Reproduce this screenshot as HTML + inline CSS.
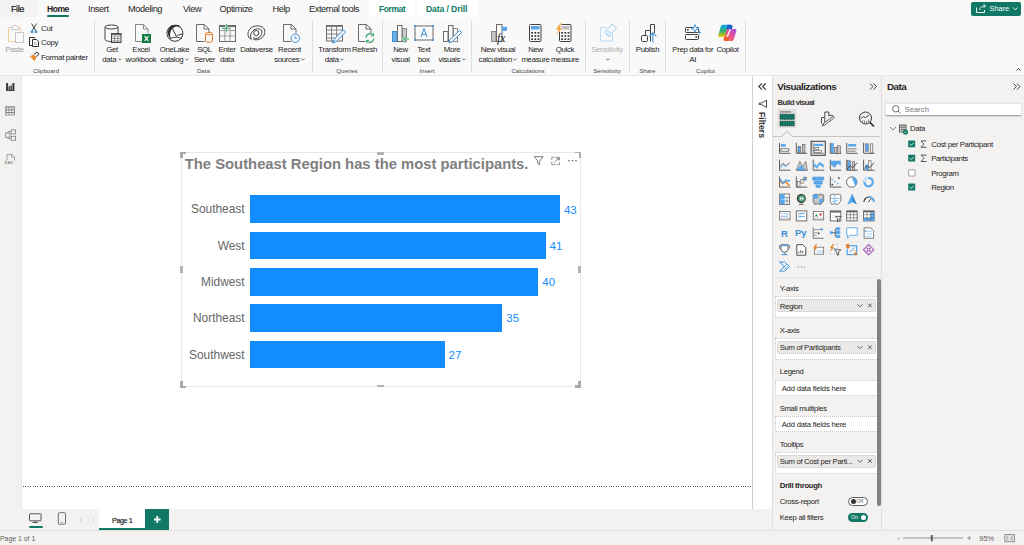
<!DOCTYPE html>
<html><head><meta charset="utf-8">
<style>
*{margin:0;padding:0;box-sizing:border-box}
html,body{width:1024px;height:545px;overflow:hidden;background:#f9f9f9;font-family:"Liberation Sans",sans-serif;color:#252423}
.a{position:absolute}
.t{position:absolute;white-space:nowrap;line-height:10px}
.c{text-align:center}
svg{position:absolute;overflow:visible}
/* tabs */
.tab{position:absolute;top:3px;line-height:12px;font-size:9.2px;letter-spacing:-0.4px;color:#252423;white-space:nowrap}
/* ribbon */
.rl{position:absolute;font-size:7.8px;letter-spacing:-0.32px;line-height:10px;color:#252423;text-align:center;white-space:nowrap}
.gl{position:absolute;top:66px;font-size:6.1px;line-height:10px;color:#484644;text-align:center;white-space:nowrap}
.sep{position:absolute;top:20px;width:1px;height:53px;background:#e1dfdd}
.chev{display:inline-block;width:2.4px;height:2.4px;border-right:0.7px solid #484644;border-bottom:0.7px solid #484644;transform:rotate(45deg);margin-left:1.5px;vertical-align:2.2px}
.pt{font-size:7.2px;color:#252423}
</style></head>
<body>
<!-- top tab strip -->
<div class="a" style="left:0;top:0;width:1024px;height:18px;background:#f9f9f9"></div>
<div class="a" style="left:0;top:0;width:37px;height:17px;background:#f3f3f3"></div>
<div class="a" style="left:369px;top:0;width:46px;height:17px;background:#ffffff"></div>
<div class="a" style="left:417px;top:0;width:60px;height:17px;background:#ffffff"></div>
<!-- ribbon -->
<div class="a" style="left:0;top:17px;width:1024px;height:58px;background:#f9f9f9"></div>
<div class="a" style="left:0;top:75px;width:1024px;height:1px;background:#e6e6e6"></div>

<div class="tab" style="left:11px;color:#1b1a19;font-weight:400;font-size:9.2px;letter-spacing:-0.5px;-webkit-text-stroke:0.2px #1b1a19">File</div>
<div class="tab" style="left:47px;color:#252423;font-weight:700;font-size:8.6px;letter-spacing:-0.5px">Home</div>
<div class="tab" style="left:88px;color:#252423;font-weight:400">Insert</div>
<div class="tab" style="left:128px;color:#252423;font-weight:400">Modeling</div>
<div class="tab" style="left:183px;color:#252423;font-weight:400">View</div>
<div class="tab" style="left:219.5px;color:#252423;font-weight:400">Optimize</div>
<div class="tab" style="left:272.5px;color:#252423;font-weight:400">Help</div>
<div class="tab" style="left:309px;color:#252423;font-weight:400">External tools</div>
<div class="tab" style="left:379px;color:#117865;font-weight:700;font-size:8.4px;letter-spacing:-0.35px">Format</div>
<div class="tab" style="left:426px;color:#117865;font-weight:700;font-size:8.6px;letter-spacing:-0.1px">Data / Drill</div>
<div class="a" style="left:47px;top:15px;width:22px;height:2px;background:#117865;border-radius:1px"></div>
<div class="rl" style="left:-15.5px;top:44.6px;width:60px;color:#a19f9d">Paste</div>
<div class="rl" style="left:82.0px;top:44.6px;width:60px">Get</div>
<div class="rl" style="left:82.0px;top:55px;width:60px">data<svg style="position:relative;display:inline-block;vertical-align:1.5px;margin-left:1.5px" width="4" height="3"><path d="M0.4 0.6l1.6 1.6 1.6-1.6" stroke="#484644" stroke-width="0.8" fill="none"/></svg></div>
<div class="rl" style="left:111.0px;top:44.6px;width:60px">Excel</div>
<div class="rl" style="left:111.0px;top:55px;width:60px">workbook</div>
<div class="rl" style="left:144.5px;top:44.6px;width:60px">OneLake</div>
<div class="rl" style="left:144.5px;top:55px;width:60px">catalog<svg style="position:relative;display:inline-block;vertical-align:1.5px;margin-left:1.5px" width="4" height="3"><path d="M0.4 0.6l1.6 1.6 1.6-1.6" stroke="#484644" stroke-width="0.8" fill="none"/></svg></div>
<div class="rl" style="left:174.5px;top:44.6px;width:60px">SQL</div>
<div class="rl" style="left:174.5px;top:55px;width:60px">Server</div>
<div class="rl" style="left:197.0px;top:44.6px;width:60px">Enter</div>
<div class="rl" style="left:197.0px;top:55px;width:60px">data</div>
<div class="rl" style="left:226.5px;top:44.6px;width:60px">Dataverse</div>
<div class="rl" style="left:259.5px;top:44.6px;width:60px">Recent</div>
<div class="rl" style="left:259.5px;top:55px;width:60px">sources<svg style="position:relative;display:inline-block;vertical-align:1.5px;margin-left:1.5px" width="4" height="3"><path d="M0.4 0.6l1.6 1.6 1.6-1.6" stroke="#484644" stroke-width="0.8" fill="none"/></svg></div>
<div class="rl" style="left:304.5px;top:44.6px;width:60px">Transform</div>
<div class="rl" style="left:304.5px;top:55px;width:60px">data<svg style="position:relative;display:inline-block;vertical-align:1.5px;margin-left:1.5px" width="4" height="3"><path d="M0.4 0.6l1.6 1.6 1.6-1.6" stroke="#484644" stroke-width="0.8" fill="none"/></svg></div>
<div class="rl" style="left:334.5px;top:44.6px;width:60px">Refresh</div>
<div class="rl" style="left:370.6px;top:44.6px;width:60px">New</div>
<div class="rl" style="left:370.6px;top:55px;width:60px">visual</div>
<div class="rl" style="left:393.8px;top:44.6px;width:60px">Text</div>
<div class="rl" style="left:393.8px;top:55px;width:60px">box</div>
<div class="rl" style="left:422.0px;top:44.6px;width:60px">More</div>
<div class="rl" style="left:422.0px;top:55px;width:60px">visuals<svg style="position:relative;display:inline-block;vertical-align:1.5px;margin-left:1.5px" width="4" height="3"><path d="M0.4 0.6l1.6 1.6 1.6-1.6" stroke="#484644" stroke-width="0.8" fill="none"/></svg></div>
<div class="rl" style="left:468.0px;top:44.6px;width:60px">New visual</div>
<div class="rl" style="left:468.0px;top:55px;width:60px">calculation<svg style="position:relative;display:inline-block;vertical-align:1.5px;margin-left:1.5px" width="4" height="3"><path d="M0.4 0.6l1.6 1.6 1.6-1.6" stroke="#484644" stroke-width="0.8" fill="none"/></svg></div>
<div class="rl" style="left:505.5px;top:44.6px;width:60px">New</div>
<div class="rl" style="left:505.5px;top:55px;width:60px">measure</div>
<div class="rl" style="left:535.0px;top:44.6px;width:60px">Quick</div>
<div class="rl" style="left:535.0px;top:55px;width:60px">measure</div>
<div class="rl" style="left:577.0px;top:44.6px;width:60px;color:#b3b0ad">Sensitivity</div>
<div class="rl" style="left:577.0px;top:55px;width:60px;color:#b3b0ad"><svg style="position:relative;display:inline-block;vertical-align:1.5px;margin-left:1.5px" width="4" height="3"><path d="M0.4 0.6l1.6 1.6 1.6-1.6" stroke="#484644" stroke-width="0.8" fill="none"/></svg></div>
<div class="rl" style="left:617.5px;top:44.6px;width:60px">Publish</div>
<div class="rl" style="left:662.8px;top:44.6px;width:60px">Prep data for</div>
<div class="rl" style="left:662.8px;top:55px;width:60px">AI</div>
<div class="rl" style="left:697.5px;top:44.6px;width:60px">Copilot</div>
<div class="gl" style="left:16px;width:60px">Clipboard</div>
<div class="gl" style="left:173.4px;width:60px">Data</div>
<div class="gl" style="left:317px;width:60px">Queries</div>
<div class="gl" style="left:397px;width:60px">Insert</div>
<div class="gl" style="left:498px;width:60px">Calculations</div>
<div class="gl" style="left:577px;width:60px">Sensitivity</div>
<div class="gl" style="left:617.4px;width:60px">Share</div>
<div class="gl" style="left:675.5px;width:60px">Copilot</div>
<div class="sep" style="left:94px"></div>
<div class="sep" style="left:312px"></div>
<div class="sep" style="left:382px"></div>
<div class="sep" style="left:471px"></div>
<div class="sep" style="left:585px"></div>
<div class="sep" style="left:629px"></div>
<div class="sep" style="left:665px"></div>
<div class="sep" style="left:745px"></div>
<div class="t" style="left:41px;top:23.6px;font-size:7.9px;letter-spacing:-0.3px">Cut</div>
<div class="t" style="left:41px;top:38.2px;font-size:7.9px;letter-spacing:-0.3px">Copy</div>
<div class="t" style="left:41px;top:52.6px;font-size:7.9px;letter-spacing:-0.33px">Format painter</div>
<div class="a" style="left:971px;top:1.5px;width:50px;height:14px;background:#117865;border-radius:2px"></div>
<div class="t" style="left:989.5px;top:3.5px;font-size:7.4px;color:#fff">Share</div>
<!-- left nav -->
<div class="a" style="left:0;top:76px;width:22px;height:434px;background:#f3f2f1"></div>
<!-- canvas -->
<div class="a" style="left:22px;top:76px;width:730px;height:433px;background:#ffffff"></div>
<!-- filters pane -->
<div class="a" style="left:752px;top:76px;width:1px;height:433px;background:#d2d0ce"></div>
<div class="a" style="left:753px;top:76px;width:19px;height:433px;background:#ffffff"></div>
<!-- viz pane -->
<div class="a" style="left:772px;top:76px;width:109px;height:454px;background:#f3f2f1;border-left:1px solid #e1dfdd"></div>
<!-- data pane -->
<div class="a" style="left:881px;top:76px;width:143px;height:454px;background:#f3f2f1;border-left:1px solid #e1dfdd"></div>
<!-- page bar -->
<div class="a" style="left:0;top:509px;width:772px;height:21px;background:#f3f2f1"></div>
<!-- status bar -->
<div class="a" style="left:0;top:530px;width:1024px;height:15px;background:#f3f2f1;border-top:1px solid #e1dfdd"></div>


<svg style="left:0;top:0" width="1024" height="80" viewBox="0 0 1024 80" fill="none" stroke-width="1">
<!-- Paste (disabled) -->
<path d="M10.5 27.5h-2v14h7" stroke="#f8cf9c"/>
<path d="M18.5 27.5h2v4" stroke="#f8cf9c"/>
<path d="M11.5 29.5v-2.5h1.5l1.5-2h1.5l1.5 2h1.5v2.5z" stroke="#c8c6c4" fill="#f9f9f9"/>
<rect x="15.5" y="32.5" width="8" height="10" stroke="#c8c6c4" fill="#f9f9f9"/>
<!-- Cut -->
<path d="M31.5 23.5l4.5 7.5M36.5 23.5l-4.5 7.5" stroke="#323130" stroke-width="0.9"/>
<circle cx="32" cy="31.8" r="1.5" fill="#4f9ad8"/>
<circle cx="36" cy="31.8" r="1.5" fill="#4f9ad8"/>
<!-- Copy -->
<path d="M32.5 45.5h-3v-8h5l0.5 1" stroke="#323130"/>
<path d="M32.5 39.5h4l2 2v5h-6z" stroke="#323130" fill="#f9f9f9"/>
<path d="M34 42.5h2M34 44.2h3" stroke="#8a8886" stroke-width="0.7"/>
<!-- Format painter -->
<path d="M29.5 56.5l4 -2 3 3 -2 3.5z" fill="#e8892c"/>
<path d="M29.5 56.5l3 1.5" stroke="#f9f9f9" stroke-width="0.6"/>
<path d="M34 54.5l3-2.5 1.8 1.8-2.5 3" stroke="#323130" fill="#f9f9f9"/>
<!-- Get data -->
<path d="M105 27v12.5c0 1.2 3 2 6 2" stroke="#424242"/>
<ellipse cx="111.5" cy="27" rx="6.5" ry="2" stroke="#424242" fill="#f9f9f9"/>
<path d="M118 27v6" stroke="#424242"/>
<rect x="111.5" y="33.5" width="9.5" height="9" stroke="#424242" fill="#f9f9f9"/>
<path d="M111.5 36h9.5M111.5 38.5h9.5M111.5 41h9.5M114.5 36v6.5M117.8 36v6.5" stroke="#6b6b6b" stroke-width="0.7"/>
<path d="M111.5 34h9.5" stroke="#424242" stroke-width="1.5"/>
<!-- Excel -->
<path d="M142 41.5h-6.5v-17h8l4.5 4.5v4.5" stroke="#8a8886"/>
<path d="M143.5 24.5v4.5h4.5" stroke="#8a8886"/>
<rect x="142" y="34" width="9" height="9" fill="#107c41"/>
<path d="M144.6 36.2l3.8 4.6M148.4 36.2l-3.8 4.6" stroke="#fff" stroke-width="1.1"/>
<!-- OneLake -->
<circle cx="174.9" cy="33.3" r="8" stroke="#323130" stroke-width="1" fill="#f9f9f9"/>
<path d="M171 25.8C175.5 23.8 179.5 24.6 181.2 26.8C177.5 25.6 173 26.8 171 30.5C169.5 33.5 169.8 37 171.5 39.5C167.5 37.5 166 30 171 25.8z" fill="#323130"/>
<path d="M172.3 28.3L176.3 36.3C178 34.8 180.5 34 182.5 34.3" stroke="#323130" stroke-width="1"/>
<path d="M170.3 38.6C174 36.7 179 36.8 181.8 38.7" stroke="#323130" stroke-width="0.9"/>
<!-- SQL Server -->
<path d="M204.5 41.5h-8v-17h8l4.5 4.5v3" stroke="#6b6b6b"/>
<path d="M204 24.5v4.5h5" stroke="#6b6b6b"/>
<path d="M205.5 33.5v7.5c0 0.8 1.5 1.3 3.5 1.3s3.5-0.5 3.5-1.3v-7.5" stroke="#e07b2a" fill="#f9f9f9"/>
<ellipse cx="209" cy="33.6" rx="3.5" ry="1.2" stroke="#e07b2a" fill="#f9f9f9"/>
<!-- Enter data -->
<rect x="219.5" y="25.5" width="16" height="16" stroke="#6b6b6b"/>
<path d="M219.5 26.2h16" stroke="#6b6b6b" stroke-width="1.6"/>
<path d="M219.5 30.5h16M219.5 36h16M224.8 26v15.5M230 26v15.5" stroke="#8a8886" stroke-width="0.8"/>
<path d="M221.5 28.3h9M226.3 23.5v9" stroke="#f9f9f9" stroke-width="2"/>
<path d="M222 28.3h8.5M226.3 24v8.5" stroke="#38a169" stroke-width="1"/>
<!-- Dataverse -->
<path d="M251.5 39.2c-3.5-0.8-4.5-5.5-2.5-9c2.2-3.8 7.5-5.2 11.8-3.8c3.8 1.2 5 5.2 3.2 8.8c-2 3.8-7 5.5-10.8 4.2" stroke="#424242" stroke-width="1"/>
<path d="M251.5 39.2c-1.5-2.5-1-6 1.5-8.5c2.5-2.3 6.5-2.5 8.5-0.5" stroke="#424242" stroke-width="1"/>
<circle cx="256.3" cy="33" r="2.6" stroke="#424242" stroke-width="1"/>
<path d="M253.2 37.5c2 1.5 5.5 1 7.5-1.5c1.5-2 1.5-4.5 0.8-6.2" stroke="#424242" stroke-width="1"/>
<!-- Recent sources -->
<path d="M291 41.5h-7.5v-17h8l4.5 4.5v4" stroke="#6b6b6b"/>
<path d="M291 24.5v4.5h5" stroke="#6b6b6b"/>
<circle cx="295.3" cy="38.2" r="4.2" stroke="#3c8fd6" fill="#f9f9f9"/>
<path d="M295 35.8v2.6h2" stroke="#3c8fd6" stroke-width="0.9"/>
<!-- Transform data -->
<rect x="326.5" y="25.5" width="16" height="15.5" stroke="#6b6b6b"/>
<path d="M326.5 26h16" stroke="#6b6b6b" stroke-width="1.6"/>
<path d="M326.5 30h16M326.5 34h16M326.5 38h12M331.5 26v15M336.5 26v12" stroke="#6b6b6b" stroke-width="0.8"/>
<path d="M343.5 30l2 2-10 10.2-3 0.8 0.8-3z" stroke="#3c8fd6" fill="#f9f9f9"/>
<path d="M335.5 40l-2.8 2.6" stroke="#3c8fd6"/>
<!-- Refresh -->
<path d="M365 41.5h-6.5v-17h8l4.5 4.5v4" stroke="#6b6b6b"/>
<path d="M366 24.5v4.5h5" stroke="#6b6b6b"/>
<path d="M366 37.5a4 4 0 0 1 7-2.5M373.8 38.5a4 4 0 0 1-7 2.5" stroke="#38a169" stroke-width="1.1"/>
<path d="M373.5 33v2.8h-2.8M366.3 43.2v-2.8h2.8" stroke="#38a169" stroke-width="1"/>
<!-- New visual -->
<rect x="392.5" y="31.5" width="4.5" height="10" fill="#6aaeea" stroke="#3c8fd6"/>
<rect x="397.5" y="25.5" width="4.5" height="16" stroke="#6b6b6b" fill="#f9f9f9"/>
<rect x="402.5" y="28.5" width="4" height="13" fill="#c8c6c4" stroke="#8a8886"/>
<path d="M400.5 39h9M405 34.5v9" stroke="#f9f9f9" stroke-width="2"/>
<path d="M401 39h8M405 35v8" stroke="#38a169" stroke-width="1"/>
<!-- Text box -->
<rect x="415" y="26" width="18" height="14" stroke="#6b6b6b"/>
<circle cx="415" cy="26" r="1" fill="#3c8fd6"/><circle cx="433" cy="26" r="1" fill="#3c8fd6"/>
<circle cx="415" cy="40" r="1" fill="#3c8fd6"/><circle cx="433" cy="40" r="1" fill="#3c8fd6"/>
<path d="M421 37l3-8.5 3 8.5M422 34.5h4" stroke="#3c8fd6" stroke-width="1"/>
<!-- More visuals -->
<rect x="443.5" y="31.5" width="4.5" height="10" stroke="#6b6b6b" fill="#f9f9f9"/>
<rect x="448.5" y="25.5" width="4.5" height="16" stroke="#6b6b6b" fill="#f9f9f9"/>
<rect x="453.5" y="28.5" width="4" height="13" stroke="#8a8886" fill="#f9f9f9"/>
<path d="M459.5 30.5l2 2-9.5 9.5-3 0.8 0.8-3z" stroke="#3c8fd6" fill="#f9f9f9"/>
<!-- New visual calculation -->
<rect x="491.5" y="31.5" width="4.5" height="10" fill="#c8c6c4" stroke="#8a8886"/>
<rect x="496.5" y="24.5" width="5.5" height="17" stroke="#6b6b6b" fill="#f9f9f9"/>
<rect x="502" y="26.8" width="5" height="4.2" fill="#5aa7ec"/>
<text x="497" y="41.5" font-family="Liberation Serif" font-style="italic" font-size="11.5" fill="#1b1a19">fx</text>
<!-- New measure -->
<rect x="529.5" y="24.5" width="11.5" height="17" rx="1" stroke="#424242" fill="#f9f9f9"/>
<rect x="531" y="26" width="8.5" height="3.5" fill="#5ba3e6"/>
<g fill="#323130"><rect x="531.2" y="32" width="1.8" height="1.6"/><rect x="534.4" y="32" width="1.8" height="1.6"/><rect x="537.6" y="32" width="1.8" height="1.6"/>
<rect x="531.2" y="35.2" width="1.8" height="1.6"/><rect x="534.4" y="35.2" width="1.8" height="1.6"/><rect x="537.6" y="35.2" width="1.8" height="1.6"/>
<rect x="531.2" y="38.4" width="1.8" height="1.6"/><rect x="534.4" y="38.4" width="1.8" height="1.6"/><rect x="537.6" y="38.4" width="1.8" height="1.6"/></g>
<!-- Quick measure -->
<rect x="559.5" y="24.5" width="11.5" height="17" rx="1" stroke="#424242" fill="#f9f9f9"/>
<rect x="561" y="26" width="8.5" height="3.5" fill="#bdbdbd"/>
<g fill="#323130"><rect x="561.2" y="32" width="1.8" height="1.6"/><rect x="564.4" y="32" width="1.8" height="1.6"/><rect x="567.6" y="32" width="1.8" height="1.6"/>
<rect x="561.2" y="35.2" width="1.8" height="1.6"/><rect x="564.4" y="35.2" width="1.8" height="1.6"/><rect x="567.6" y="35.2" width="1.8" height="1.6"/>
<rect x="561.2" y="38.4" width="1.8" height="1.6"/><rect x="564.4" y="38.4" width="1.8" height="1.6"/><rect x="567.6" y="38.4" width="1.8" height="1.6"/></g>
<path d="M560.8 22.8l-5.6 7h3.3l-3.2 6.2 7.6-8.3h-3.3l2.8-4.9z" fill="#f29a2e" stroke="#f9f9f9" stroke-width="0.6"/>
<!-- Sensitivity (disabled) -->
<path d="M600.5 27.5v13.5h12v-7" stroke="#b9d9f2"/>
<path d="M600.5 27.5h6" stroke="#b9d9f2"/>
<path d="M612 24l4.5 4-7.5 8.5-4.5-4z" stroke="#9ccbee" fill="#f9f9f9"/>
<path d="M606 33l3 2.8M607.2 31.6l3 2.8M608.4 30.2l3 2.8" stroke="#9ccbee" stroke-width="0.8"/>
<!-- Publish -->
<rect x="641.5" y="35.5" width="6" height="6" rx="1" stroke="#424242"/>
<path d="M645.5 35.5v-5h5v11" stroke="#424242"/>
<path d="M650.5 30.5v-6h4v8.5" stroke="#424242"/>
<path d="M652.8 42.6v-9.5M649.3 36.3l3.5-3.5 3.5 3.5" stroke="#3c8fd6" stroke-width="1.1"/>
<!-- Prep data for AI -->
<rect x="685.5" y="27.5" width="13" height="5" rx="0.8" stroke="#424242" fill="#f9f9f9"/>
<rect x="685.5" y="34.5" width="13" height="5" rx="0.8" stroke="#424242" fill="#f9f9f9"/>
<rect x="687" y="29.2" width="1.6" height="1.6" fill="#323130"/>
<rect x="695.5" y="36.2" width="1.6" height="1.6" fill="#323130"/>
<path d="M695 24.5l1 3 3 1-3 1-1 3-1-3-3-1 3-1z" stroke="#3c8fd6" fill="#f9f9f9" stroke-width="0.9"/>
<path d="M699.5 30.5l0.6 1.4 1.4 0.6-1.4 0.6-0.6 1.4-0.6-1.4-1.4-0.6 1.4-0.6z" fill="#3c8fd6"/>
<!-- Copilot -->
<defs>
<linearGradient id="cpA" x1="0" y1="0" x2="0" y2="1"><stop offset="0" stop-color="#1aa0f5"/><stop offset="0.5" stop-color="#2bb673"/><stop offset="1" stop-color="#f5c400"/></linearGradient>
<linearGradient id="cpB" x1="1" y1="0" x2="0" y2="1"><stop offset="0" stop-color="#9b4fe8"/><stop offset="0.5" stop-color="#ee4f8c"/><stop offset="1" stop-color="#ff8a3d"/></linearGradient>
</defs>
<path d="M722.5 24.8H730.5C732 24.8 732.8 26 732.3 27.5L728.5 37H719.8C718.6 37 718 36 718.3 35L720.8 26.6C721.1 25.5 721.7 24.8 722.5 24.8Z" fill="url(#cpA)"/>
<path d="M727.5 24.8H730.5C732 24.8 732.8 26 732.3 27.5L731.6 29.5H726.5z" fill="#1d4fd0" opacity="0.8"/>
<path d="M728 29H734.8C736 29 736.7 30 736.3 31.3L733.7 39.5C733.4 40.4 732.6 41 731.7 41H725.5C724.3 41 723.8 40 724.1 39L726.5 30.5C726.8 29.6 727.3 29 728 29Z" fill="url(#cpB)"/>
<path d="M724.3 37h4.5l-1 4h-2.8c-1.2 0-1.7-1-1.4-2z" fill="#f25a2a" opacity="0.85"/>
<path d="M730.3 29.2l-3.1 7.6" stroke="#ffffff" stroke-width="1.3"/>
<!-- Share icon -->
<path d="M976.5 7.5v5h8v-2.5" stroke="#fff" stroke-width="0.9"/>
<path d="M979.5 10c0.5-2.5 2.5-4 5-4h0.5M983.5 4l2 2-2 2" stroke="#fff" stroke-width="0.9"/>
<path d="M1013 7.5l2.3 2.3 2.3-2.3" stroke="#fff" stroke-width="0.9"/>
<!-- ribbon collapse -->
<path d="M1016.5 70.5l2-2 2 2" stroke="#323130" stroke-width="0.9"/>
</svg>

<div class="a" style="left:21px;top:76px;width:1px;height:433px;background:#e8e6e4"></div>
<svg style="left:0;top:0" width="30" height="170" fill="none">
<rect x="6.1" y="83" width="2" height="7.8" fill="#3b3a39"/>
<rect x="8.4" y="86.2" width="1.7" height="4.6" fill="#555453"/>
<rect x="10.4" y="85.4" width="1.7" height="5.4" fill="#555453"/>
<rect x="12.4" y="83" width="2" height="7.8" fill="#3b3a39"/>
<rect x="6.1" y="90" width="8.3" height="0.9" fill="#3b3a39"/>
<rect x="5.3" y="106.3" width="9.6" height="9.1" fill="#858382" />
<g fill="#f3f2f1"><rect x="6.5" y="107.6" width="2" height="1.7"/><rect x="9.2" y="107.6" width="2" height="1.7"/><rect x="11.9" y="107.6" width="2" height="1.7"/>
<rect x="6.5" y="110.3" width="2" height="1.7"/><rect x="9.2" y="110.3" width="2" height="1.7"/><rect x="11.9" y="110.3" width="2" height="1.7"/>
<rect x="6.5" y="113" width="2" height="1.7"/><rect x="9.2" y="113" width="2" height="1.7"/><rect x="11.9" y="113" width="2" height="1.7"/></g>
<rect x="5.7" y="133" width="4.2" height="4.3" stroke="#8a8886" stroke-width="0.9"/>
<rect x="11.2" y="129.9" width="4.3" height="4" stroke="#8a8886" stroke-width="0.9"/>
<rect x="11.2" y="136.3" width="4.3" height="4" stroke="#8a8886" stroke-width="0.9"/>
<path d="M8 133v-1.5h3.2M8 137.3v1.5h3.2" stroke="#8a8886" stroke-width="0.8"/>
<path d="M7 160.5v-6h4.8l2.7 2.7v3.3" stroke="#9a9896" stroke-width="0.9"/><path d="M11.5 154.5v2.8h3" stroke="#9a9896" stroke-width="0.7"/>
<text x="4.6" y="164.3" font-family="Liberation Sans" font-size="4" font-weight="700" fill="#8a8886">DAX</text>
</svg>

<div class="a" style="left:180.8px;top:152.3px;width:399.8px;height:234.6px;border:1.4px solid #e8e8e8"></div>
<div class="a" style="left:377px;top:152px;width:7px;height:2.6px;background:#b3b3b3"></div>
<div class="a" style="left:377px;top:384.8px;width:7px;height:2.6px;background:#b3b3b3"></div>
<div class="a" style="left:180.1px;top:152.1px;width:6px;height:2px;background:#aaaaaa"></div><div class="a" style="left:180.1px;top:152.1px;width:2.8px;height:5.6px;background:#aaaaaa"></div><div class="a" style="left:575px;top:152.1px;width:5.8px;height:1.4px;background:#aaaaaa"></div><div class="a" style="left:579.4px;top:152.1px;width:1.4px;height:5.7px;background:#aaaaaa"></div><div class="a" style="left:180.2px;top:381.2px;width:2.8px;height:6.4px;background:#aaaaaa"></div><div class="a" style="left:180.2px;top:385.6px;width:5.8px;height:2px;background:#aaaaaa"></div><div class="a" style="left:578.3px;top:381.2px;width:2.5px;height:6.4px;background:#aaaaaa"></div><div class="a" style="left:575px;top:385.1px;width:5.8px;height:2.5px;background:#aaaaaa"></div>
<div class="a" style="left:180.2px;top:266px;width:2.6px;height:7px;background:#b3b3b3"></div>
<div class="a" style="left:578px;top:265.9px;width:3px;height:7.1px;background:#b3b3b3"></div>
<div class="t" style="left:184.8px;top:156.1px;line-height:16px;font-size:14.8px;font-weight:700;color:#808080">The Southeast Region has the most participants.</div>
<svg style="left:0;top:0" width="1024" height="545" fill="none">
<path d="M534.2 156.7h9l-3.5 4.2v3.8l-2 -1v-2.8z" stroke="#6b6b6b" stroke-width="0.9"/>
<path d="M551.8 160v-2.7h2.7M559.6 162v2.7h-2.7M551.8 162v2.7h4M559.6 160v-2.7h-4M553.5 163l5-4.5M556.3 158.3h2.4v2.4" stroke="#8a8886" stroke-width="0.9"/>
<circle cx="569" cy="160.7" r="0.8" fill="#605e5c"/><circle cx="572.5" cy="160.7" r="0.8" fill="#605e5c"/><circle cx="576" cy="160.7" r="0.8" fill="#605e5c"/>
</svg>
<div class="a" style="left:249.9px;top:195.30px;width:310.03px;height:27.7px;background:#118dff"></div>
<div class="t" style="left:140px;width:104.6px;text-align:right;top:202.45px;line-height:14px;font-size:11.9px;color:#666666">Southeast</div>
<div class="t" style="left:563.93px;top:202.50px;line-height:14px;font-size:11.5px;color:#118dff">43</div>
<div class="a" style="left:249.9px;top:231.60px;width:295.61px;height:27.7px;background:#118dff"></div>
<div class="t" style="left:140px;width:104.6px;text-align:right;top:238.75px;line-height:14px;font-size:11.9px;color:#666666">West</div>
<div class="t" style="left:549.51px;top:238.80px;line-height:14px;font-size:11.5px;color:#118dff">41</div>
<div class="a" style="left:249.9px;top:267.90px;width:288.40px;height:27.7px;background:#118dff"></div>
<div class="t" style="left:140px;width:104.6px;text-align:right;top:275.05px;line-height:14px;font-size:11.9px;color:#666666">Midwest</div>
<div class="t" style="left:542.30px;top:275.10px;line-height:14px;font-size:11.5px;color:#118dff">40</div>
<div class="a" style="left:249.9px;top:304.20px;width:252.35px;height:27.7px;background:#118dff"></div>
<div class="t" style="left:140px;width:104.6px;text-align:right;top:311.35px;line-height:14px;font-size:11.9px;color:#666666">Northeast</div>
<div class="t" style="left:506.25px;top:311.40px;line-height:14px;font-size:11.5px;color:#118dff">35</div>
<div class="a" style="left:249.9px;top:340.50px;width:194.67px;height:27.7px;background:#118dff"></div>
<div class="t" style="left:140px;width:104.6px;text-align:right;top:347.65px;line-height:14px;font-size:11.9px;color:#666666">Southwest</div>
<div class="t" style="left:448.57px;top:347.70px;line-height:14px;font-size:11.5px;color:#118dff">27</div>
<div class="a" style="left:23px;top:486px;width:729px;height:1px;background:repeating-linear-gradient(90deg,#555 0 1px,transparent 1px 2.4px)"></div>
<svg style="left:0;top:0" width="1024" height="545" fill="none">
<path d="M762 83.3l-3.2 3.2 3.2 3.2M765.8 83.3l-3.2 3.2 3.2 3.2" stroke="#323130" stroke-width="1.1"/>
<path d="M766.5 100.2v7.3l-5-2.9h-2.3v-1.5h2.3z" stroke="#323130" stroke-width="0.9" stroke-linejoin="round"/>
</svg>
<div class="t" style="left:732px;top:120px;width:60px;line-height:10px;font-size:8.7px;font-weight:700;color:#323130;transform:rotate(90deg);transform-origin:center;text-align:center">Filters</div>

<svg style="left:0;top:0" width="1024" height="545" fill="none" stroke-width="1">
<g transform="translate(779,142.8)"><path d="M0.5 0v10.5h11" stroke="#605e5c"/><rect x="1.8" y="1.3" width="5" height="2.6" fill="#5aa7ec"/><rect x="1.8" y="6" width="8" height="2.4" stroke="#605e5c" stroke-width="0.8" fill="#ffffff"/></g>
<g transform="translate(795.8,142.8)"><path d="M0.5 0v10.5h11" stroke="#605e5c"/><rect x="2.2" y="3.5" width="2.6" height="6.5" fill="#5aa7ec" stroke="#605e5c" stroke-width="0.6"/><rect x="6.5" y="1.5" width="2.6" height="8.6" stroke="#605e5c" stroke-width="0.7" fill="#c8c6c4"/></g>
<g transform="translate(812.7,142.8)"><rect x="-1.6" y="-1.5" width="14.2" height="14" stroke="#484644" stroke-width="1.1"/><path d="M0.5 0v10.5h11" stroke="#605e5c" stroke-width="0.8"/><rect x="1.5" y="1" width="9" height="2.3" fill="#5aa7ec"/><rect x="1.5" y="4.5" width="4.5" height="2" stroke="#605e5c" stroke-width="0.6"/><rect x="1.5" y="7.5" width="7" height="2" stroke="#605e5c" stroke-width="0.6"/></g>
<g transform="translate(829.8,142.8)"><path d="M0.5 0v10.5h11" stroke="#605e5c"/><rect x="1.2" y="0.3" width="2.8" height="10" fill="#5aa7ec"/><rect x="4.5" y="4.5" width="2.6" height="6" fill="#c8c6c4" stroke="#605e5c" stroke-width="0.6"/><rect x="7.8" y="3" width="3" height="7.5" fill="#c8c6c4" stroke="#605e5c" stroke-width="0.6"/></g>
<g transform="translate(846.2,142.8)"><path d="M0.5 0v10.5h11" stroke="#605e5c"/><rect x="2" y="1.2" width="8" height="2.6" fill="#5aa7ec"/><path d="M1.5 6h9M1.5 8.3h8" stroke="#605e5c" stroke-width="0.8"/></g>
<g transform="translate(863.1,142.8)"><path d="M0.5 0v10.5h11" stroke="#605e5c"/><rect x="2.3" y="1" width="3" height="7.5" fill="#5aa7ec" stroke="#605e5c" stroke-width="0.5"/><rect x="7.2" y="1" width="2.5" height="9.5" stroke="#605e5c" stroke-width="0.7"/></g>
<g transform="translate(779,159.7)"><path d="M0.5 0v10.5h11" stroke="#605e5c"/><path d="M1 9l3-4 2.5 2 4-4" stroke="#5aa7ec" stroke-width="0.9"/><path d="M1 6.5l3-3 3 2.5 3.5-3" stroke="#605e5c" stroke-width="0.8"/></g>
<g transform="translate(795.8,159.7)"><path d="M0.5 10.5h11" stroke="#605e5c"/><path d="M0.5 10.5l3.5-9 3 5 3-5 1.5 9z" fill="#c8c6c4" stroke="#605e5c" stroke-width="0.6"/><path d="M0.5 10.5l2.5-3 3 -2 3.5 5z" fill="#5aa7ec"/></g>
<g transform="translate(812.7,159.7)"><path d="M0.5 0v10.5h11" stroke="#605e5c"/><path d="M1 3l3 3 3-4 4 3v3l-4-3-3 4-3-3z" fill="#5aa7ec"/><path d="M1 5l3 3 3-4 4 3" stroke="#5aa7ec" stroke-width="0.8"/></g>
<g transform="translate(829.8,159.7)"><path d="M0.5 0v10.5h11" stroke="#605e5c"/><path d="M1 1h10v5l-3-2-3 4-4-3z" fill="#5aa7ec"/></g>
<g transform="translate(846.2,159.7)"><path d="M0.5 0v10.5h11" stroke="#605e5c"/><rect x="1.5" y="1" width="2.6" height="9.5" fill="#5aa7ec" stroke="#605e5c" stroke-width="0.5"/><rect x="6" y="2" width="2.5" height="8.5" stroke="#605e5c" stroke-width="0.6" fill="#c8c6c4"/><path d="M1 9l3-3 2.5 2 4.5-5" stroke="#323130" stroke-width="0.8"/></g>
<g transform="translate(863.1,159.7)"><path d="M0.5 0v10.5h11" stroke="#605e5c"/><rect x="2" y="5" width="3" height="5.5" fill="#5aa7ec"/><rect x="5.5" y="1" width="2.5" height="9.5" stroke="#605e5c" stroke-width="0.6"/><path d="M1 9l3-3 2.5 2 4.5-5" stroke="#323130" stroke-width="0.8"/></g>
<g transform="translate(779,176.6)"><path d="M0.5 0v10.5h11" stroke="#605e5c"/><path d="M1 4l2.5 3 3-2 4 4" stroke="#e8892c" stroke-width="1.6"/><path d="M1 2.5l3 4 3-3 4 1" stroke="#5aa7ec" stroke-width="1.6"/></g>
<g transform="translate(795.8,176.6)"><path d="M0.5 0v10.5h11" stroke="#605e5c"/><rect x="1.8" y="5" width="2.4" height="5.5" stroke="#605e5c" stroke-width="0.6"/><rect x="5" y="3" width="2.4" height="4" stroke="#605e5c" stroke-width="0.6"/><rect x="8" y="0.5" width="2.4" height="3" fill="#5aa7ec" stroke="#605e5c" stroke-width="0.5"/></g>
<g transform="translate(812.7,176.6)"><path d="M0 0.5h11v3h-11z" fill="#5aa7ec" stroke="#3c8fd6" stroke-width="0.6"/><path d="M1.5 4.5h8v3h-8z" fill="#5aa7ec" stroke="#3c8fd6" stroke-width="0.6"/><path d="M3 8.2h5v3h-5z" fill="#5aa7ec"/></g>
<g transform="translate(829.8,176.6)"><path d="M0.5 0v10.5h11" stroke="#605e5c"/><circle cx="9" cy="1.5" r="0.9" fill="#323130"/><circle cx="2.5" cy="8" r="0.9" fill="#323130"/><circle cx="2.5" cy="3" r="0.8" fill="#5aa7ec"/><circle cx="5" cy="5" r="0.8" fill="#5aa7ec"/><circle cx="8" cy="7" r="0.8" fill="#5aa7ec"/></g>
<g transform="translate(846.2,176.6)"><circle cx="5.5" cy="5.5" r="5.2" stroke="#605e5c" stroke-width="0.9" fill="#ffffff"/><path d="M5.5 0.3a5.2 5.2 0 0 1 3.5 9.2z" fill="#5aa7ec"/></g>
<g transform="translate(863.1,176.6)"><circle cx="5.5" cy="5.5" r="4.2" stroke="#5aa7ec" stroke-width="2.2"/><path d="M5.5 1.3a4.2 4.2 0 0 0 -4.2 4.2" stroke="#ffffff" stroke-width="1.2"/></g>
<g transform="translate(779,193.5)"><rect x="0.5" y="0.5" width="10" height="10.5" stroke="#605e5c" stroke-width="0.8" fill="#ffffff"/><rect x="0.8" y="0.8" width="5" height="5" fill="#5aa7ec"/><rect x="0.8" y="6" width="5" height="4.8" fill="#5aa7ec"/><path d="M6 4h4.5M8 4v6.8M6 7.5h4.5" stroke="#605e5c" stroke-width="0.6"/></g>
<g transform="translate(795.8,193.5)"><circle cx="5.5" cy="5" r="4.5" fill="#3b3a39"/><circle cx="5.8" cy="5" r="3.3" fill="#38a169"/><path d="M4.5 3v4M4.5 5h3M7 3v4" stroke="#ffffff" stroke-width="0.9"/><path d="M5.5 9.5v1.2M3 11h5" stroke="#605e5c" stroke-width="0.8"/></g>
<g transform="translate(812.7,193.5)"><path d="M0.5 1.5l3-1 2 1 2-1 3.5 1v6l-3 3.5-3-0.8-3 0.8-1.5-3z" fill="#c8c6c4" stroke="#605e5c" stroke-width="0.8"/><path d="M0.5 1.5l3-1 2 1v3l-3 1-2-1z" fill="#5aa7ec"/><path d="M6.5 6l4-1v2.5l-3 3.5-1-0.5z" fill="#5aa7ec"/></g>
<g transform="translate(829.8,193.5)"><path d="M0.5 1.5l3-1 2 1 2-1 3.5 1v6l-3 3.5-3-0.8-3 0.8-1.5-3z" fill="#ffffff" stroke="#605e5c" stroke-width="0.8"/><path d="M1 5h9M5 1.5v9M2.5 8l6-1" stroke="#5aa7ec" stroke-width="0.7"/></g>
<g transform="translate(846.2,193.5)"><path d="M6 0.3l4.7 10.7-4.7-2.5-4.7 2.5z" fill="#2f8ad8"/><path d="M6 0.3l-4.7 10.7 4.7-2.5z" fill="#5fb0f0"/></g>
<g transform="translate(863.1,193.5)"><path d="M0.8 8.5a5 5 0 0 1 10 0" stroke="#3b3a39" stroke-width="1.2"/><path d="M5.8 3.5a5 5 0 0 1 5 5" stroke="#5aa7ec" stroke-width="1.8"/><path d="M5 8.5l3-3" stroke="#3b3a39" stroke-width="1"/></g>
<g transform="translate(779,210.4)"><rect x="0.5" y="1" width="10.5" height="8.5" fill="#e1dfdd" stroke="#605e5c" stroke-width="0.7"/><rect x="1.3" y="1.8" width="9" height="5" fill="#ffffff"/><text x="1.5" y="6.3" font-family="Liberation Sans" font-size="4.6" fill="#5aa7ec">123</text></g>
<g transform="translate(795.8,210.4)"><rect x="0.5" y="0.5" width="10.5" height="10" fill="#ffffff" stroke="#605e5c" stroke-width="0.9"/><path d="M2.5 3h6.5M2.5 6h6.5" stroke="#5aa7ec" stroke-width="1"/><path d="M2.5 4.5h3M2.5 7.8h3" stroke="#c8c6c4" stroke-width="0.6"/></g>
<g transform="translate(812.7,210.4)"><rect x="0.5" y="1" width="10.5" height="8.5" fill="#e1dfdd" stroke="#605e5c" stroke-width="0.7"/><rect x="1.3" y="1.8" width="9" height="5" fill="#ffffff"/><path d="M2 6l1.7-3 1.7 3z" fill="#38a169"/><path d="M6.2 3h3.4l-1.7 3z" fill="#e04646"/></g>
<g transform="translate(829.8,210.4)"><rect x="0.5" y="0.5" width="10.5" height="10" fill="#ffffff" stroke="#605e5c" stroke-width="0.9"/><path d="M0.5 1.5h10.5" stroke="#605e5c" stroke-width="1.4"/><path d="M5.5 6h6l-2.2 2.3v2.7h-1.6v-2.7z" fill="#ffffff" stroke="#3b3a39" stroke-width="0.8"/><path d="M2 5h2M2 7h2" stroke="#c8c6c4" stroke-width="0.6"/></g>
<g transform="translate(846.2,210.4)"><rect x="0.5" y="0.5" width="10.5" height="10" fill="#ffffff" stroke="#605e5c" stroke-width="0.9"/><path d="M0.5 1.2h10.5" stroke="#605e5c" stroke-width="1.4"/><path d="M0.5 4.3h10.5M0.5 7.4h10.5M4 1v9.5M7.5 1v9.5" stroke="#605e5c" stroke-width="0.6"/></g>
<g transform="translate(863.1,210.4)"><rect x="0.5" y="0.5" width="10.5" height="10" fill="#ffffff" stroke="#605e5c" stroke-width="0.9"/><path d="M0.5 1.2h10.5" stroke="#605e5c" stroke-width="1.4"/><rect x="7.5" y="2" width="3.5" height="8.5" fill="#5aa7ec"/><rect x="0.5" y="7.4" width="10.5" height="3" fill="#5aa7ec"/><path d="M0.5 4.3h10.5M0.5 7.4h10.5M4 1v9.5M7.5 1v9.5" stroke="#605e5c" stroke-width="0.5"/></g>
<g transform="translate(779,227.3)"><text x="2" y="10" font-family="Liberation Sans" font-weight="700" font-size="9.5" fill="#3c8fd6">R</text></g>
<g transform="translate(795.8,227.3)"><text x="-0.8" y="9" font-family="Liberation Sans" font-weight="700" font-size="9.5" fill="#3c8fd6">Py</text></g>
<g transform="translate(812.7,227.3)"><path d="M0.5 0v11h10.5" stroke="#605e5c" stroke-width="0.8"/><path d="M1 2.2h7M1 5.5h4M1 8h3" stroke="#605e5c" stroke-width="0.6"/><circle cx="9" cy="2" r="1.2" fill="#5aa7ec"/><circle cx="6" cy="6" r="0.9" fill="#3b3a39"/></g>
<g transform="translate(829.8,227.3)"><rect x="0" y="4" width="3" height="2.8" fill="#5aa7ec"/><path d="M3 5.4h2.5M5.5 1.5v8" stroke="#3b3a39" stroke-width="0.8"/><rect x="6" y="0" width="4.5" height="3.2" rx="1" fill="#5aa7ec"/><rect x="6" y="3.8" width="4.5" height="3.2" rx="1" fill="#5aa7ec"/><rect x="6" y="7.6" width="4.5" height="3.2" rx="1" fill="#5aa7ec"/></g>
<g transform="translate(846.2,227.3)"><path d="M0.5 0.5h10.5v7.5h-7l-2.5 3v-3h-1z" stroke="#5aa7ec" stroke-width="0.9" fill="#ffffff"/></g>
<g transform="translate(863.1,227.3)"><path d="M1 0.5h6.5l3 3v7.5h-9.5z" stroke="#605e5c" stroke-width="0.8" fill="#ffffff"/><circle cx="2.5" cy="4" r="1" fill="#5aa7ec"/><path d="M4 4h5M4 6.5h5M2 9h6" stroke="#5aa7ec" stroke-width="0.6"/></g>
<g transform="translate(779,244.2)"><path d="M2 0.5h7v4a3.5 3.5 0 0 1-7 0z" fill="#ffffff" stroke="#605e5c" stroke-width="0.9"/><path d="M2 1.5h-1.5v1.5a2 2 0 0 0 1.5 2M9 1.5h1.5v1.5a2 2 0 0 1-1.5 2" stroke="#605e5c" stroke-width="0.8"/><path d="M2 0.5h7v1.5h-7z" fill="#5aa7ec"/><path d="M5.5 8v1.5" stroke="#605e5c" stroke-width="0.9"/><rect x="2.5" y="9.5" width="6" height="1.5" rx="0.7" fill="#5aa7ec"/></g>
<g transform="translate(795.8,244.2)"><path d="M1 0.5h6l3 3v7.5h-9z" stroke="#3b3a39" stroke-width="0.9" fill="#ffffff"/><path d="M3 9v-1.5M5 9v-3M7 9v-2" stroke="#3b3a39" stroke-width="0.9"/></g>
<g transform="translate(812.7,244.2)"><rect x="2" y="3" width="9" height="7" fill="#ffffff" stroke="#605e5c" stroke-width="0.7"/><text x="3.5" y="8.5" font-family="Liberation Sans" font-size="4.2" fill="#5aa7ec">123</text><path d="M3 0l-2.5 4h2l-1.5 3.5 4-4.5h-2l1.5-3z" fill="#e8892c"/></g>
<g transform="translate(829.8,244.2)"><rect x="3.5" y="0.5" width="4" height="4" fill="#ffffff" stroke="#c8c6c4" stroke-width="0.6"/><rect x="1" y="6" width="3.5" height="4" fill="#ffffff" stroke="#c8c6c4" stroke-width="0.6"/><path d="M5 5.5h6l-2.2 2.3v3h-1.6v-3z" fill="#ffffff" stroke="#3b3a39" stroke-width="0.8"/><path d="M2.5 0l-2.5 4h2l-1.5 3.5 4-4.5h-2l1.5-3z" fill="#e8892c"/><path d="M4 4l2 1" stroke="#5aa7ec" stroke-width="0.8"/></g>
<g transform="translate(846.2,244.2)"><path d="M3 1.5h7.5v9h-9.5v-6" stroke="#5aa7ec" stroke-width="1.3"/><path d="M3.5 8l5-5" stroke="#5aa7ec" stroke-width="1"/><rect x="0" y="-0.3" width="3.2" height="4.5" rx="0.8" fill="#e07b2a"/><circle cx="9.5" cy="9.5" r="1.5" fill="#e07b2a"/><circle cx="8.2" cy="6.3" r="0.6" fill="#e07b2a"/></g>
<g transform="translate(863.1,244.2)"><path d="M5.5 0.3l5.2 5.2-5.2 5.2-5.2-5.2z" stroke="#a55fc0" stroke-width="1.1"/><circle cx="4.4" cy="4.4" r="1" fill="#a55fc0"/><circle cx="6.6" cy="4.4" r="1" fill="#a55fc0"/><circle cx="4.4" cy="6.6" r="1" fill="#a55fc0"/><circle cx="6.6" cy="6.6" r="1" fill="#a55fc0"/></g>
<g transform="translate(779,261.1)"><path d="M0.5 1h5l5 4.5-5 4.5h-5l5-4.5z" stroke="#3c8fd6" stroke-width="1" fill="#ffffff"/><path d="M3.5 8l4-5" stroke="#3c8fd6" stroke-width="0.8"/><path d="M5.5 8.5l3-3.5" stroke="#3c8fd6" stroke-width="0.8"/></g>
<g transform="translate(795.8,261.1)"><circle cx="2.5" cy="6" r="0.6" fill="#605e5c"/><circle cx="5.5" cy="6" r="0.6" fill="#605e5c"/><circle cx="8.5" cy="6" r="0.6" fill="#605e5c"/></g>
<rect x="777.4" y="109.1" width="19.1" height="19" rx="2" fill="#e1dfdd"/>
<rect x="780" y="111.2" width="11" height="1.4" fill="#8a8886"/>
<rect x="780" y="114.2" width="14.3" height="5.2" fill="#117865" stroke="#252423" stroke-width="0.7" stroke-dasharray="1 0.8"/>
<rect x="780" y="121.1" width="14.3" height="4.8" fill="#117865" stroke="#252423" stroke-width="0.7" stroke-dasharray="1 0.8"/>
<path d="M821.5 123.5v-6h2.8M824.8 123.5v-11.5h4v4M828.8 115.3h4" stroke="#3b3a39" stroke-width="0.9"/>
<path d="M833.19 116.01L834.41 117.59L824.11 125.59L822.89 124.01Z" stroke="#3b3a39" stroke-width="0.8" fill="#ffffff"/>
<path d="M822.89 124.01L824.11 125.59L821.6 126.3Z" fill="#3b3a39"/>
<path d="M825.5 123.3l7.5-5.8" stroke="#8a8886" stroke-width="0.5" stroke-dasharray="0.8 0.8"/>
<circle cx="865.5" cy="118" r="6" stroke="#323130" stroke-width="1"/>
<path d="M861 118.5l2.5-2 2 1.2 3.5-2.5" stroke="#323130" stroke-width="0.9"/>
<path d="M862.5 122.5v-2M864.5 123.5v-3M866.5 123.5v-2.5M868.5 122.5v-3" stroke="#6b6b6b" stroke-width="0.8"/>
<path d="M869.8 122.3l4.2 4" stroke="#323130" stroke-width="1.6"/>
<path d="M773 136.5h8.7l5.3-5.3 5.3 5.3h88" stroke="#c8c6c4" stroke-width="1.1"/>
<path d="M773 277.7h104" stroke="#e1dfdd" stroke-width="1"/>
<path d="M870 83.5l3 3-3 3M873.5 83.5l3 3-3 3" stroke="#323130" stroke-width="0.9"/>

</svg>
<div class="t" style="left:777.3px;top:81.6px;line-height:10px;font-size:9.8px;letter-spacing:-0.44px;font-weight:700;color:#252423">Visualizations</div>
<div class="t" style="left:777.5px;top:98.2px;line-height:10px;font-size:7.6px;letter-spacing:-0.49px;font-weight:700;color:#323130">Build visual</div>
<div class="t" style="left:779.7px;top:284.40px;line-height:10px;font-size:7.7px;letter-spacing:-0.3px;font-weight:400;color:#252423">Y-axis</div>
<div class="t" style="left:779.7px;top:325.80px;line-height:10px;font-size:7.7px;letter-spacing:-0.3px;font-weight:400;color:#252423">X-axis</div>
<div class="t" style="left:779.7px;top:367.10px;line-height:10px;font-size:7.7px;letter-spacing:-0.3px;font-weight:400;color:#252423">Legend</div>
<div class="t" style="left:779.7px;top:403.80px;line-height:10px;font-size:7.7px;letter-spacing:-0.3px;font-weight:400;color:#252423">Small multiples</div>
<div class="t" style="left:779.7px;top:440.00px;line-height:10px;font-size:7.7px;letter-spacing:-0.3px;font-weight:400;color:#252423">Tooltips</div>
<div class="a" style="left:775px;top:296.2px;width:102px;height:22.19999999999999px;background:#ffffff;border:1px dotted #c8c6c4;border-right:none"></div><div class="a" style="left:777px;top:299.2px;width:98.5px;height:13.2px;background:#ebe9e7;border:1px solid #dad8d6;border-radius:1.5px"></div><div class="t" style="left:779.7px;top:301.60px;line-height:10px;font-size:7.7px;letter-spacing:-0.3px;color:#252423">Region</div><svg style="left:0;top:0" width="1024" height="545" fill="none"><path d="M857.5 304.4l2.5 2.5 2.5-2.5M868 303.59999999999997l3.8 3.8M871.8 303.59999999999997l-3.8 3.8" stroke="#3b3a39" stroke-width="0.8"/></svg>
<div class="a" style="left:775px;top:338px;width:102px;height:22.399999999999977px;background:#ffffff;border:1px dotted #c8c6c4;border-right:none"></div><div class="a" style="left:777px;top:341px;width:98.5px;height:13.2px;background:#ebe9e7;border:1px solid #dad8d6;border-radius:1.5px"></div><div class="t" style="left:779.7px;top:343.40px;line-height:10px;font-size:7.7px;letter-spacing:-0.3px;color:#252423">Sum of Participants</div><svg style="left:0;top:0" width="1024" height="545" fill="none"><path d="M857.5 346.2l2.5 2.5 2.5-2.5M868 345.4l3.8 3.8M871.8 345.4l-3.8 3.8" stroke="#3b3a39" stroke-width="0.8"/></svg>
<div class="a" style="left:775px;top:380px;width:102px;height:16.19999999999999px;background:#ffffff;border:1px dotted #c8c6c4;border-right:none"></div><div class="t" style="left:781.7px;top:383.90px;line-height:10px;font-size:7.7px;letter-spacing:-0.2px;color:#252423">Add data fields here</div>
<div class="a" style="left:775px;top:416.4px;width:102px;height:16.100000000000023px;background:#ffffff;border:1px dotted #c8c6c4;border-right:none"></div><div class="t" style="left:781.7px;top:420.25px;line-height:10px;font-size:7.7px;letter-spacing:-0.2px;color:#252423">Add data fields here</div>
<div class="a" style="left:775px;top:451.7px;width:102px;height:22.19999999999999px;background:#ffffff;border:1px dotted #c8c6c4;border-right:none"></div><div class="a" style="left:777px;top:454.7px;width:98.5px;height:13.2px;background:#ebe9e7;border:1px solid #dad8d6;border-radius:1.5px"></div><div class="t" style="left:779.7px;top:457.10px;line-height:10px;font-size:7.7px;letter-spacing:-0.3px;color:#252423">Sum of Cost per Parti...</div><svg style="left:0;top:0" width="1024" height="545" fill="none"><path d="M857.5 459.9l2.5 2.5 2.5-2.5M868 459.09999999999997l3.8 3.8M871.8 459.09999999999997l-3.8 3.8" stroke="#3b3a39" stroke-width="0.8"/></svg>
<div class="t" style="left:779.8px;top:481.40px;line-height:10px;font-size:7.7px;letter-spacing:-0.3px;font-weight:700;color:#252423">Drill through</div>
<div class="t" style="left:779.8px;top:496.60px;line-height:10px;font-size:7.7px;letter-spacing:-0.3px;color:#252423">Cross-report</div>
<div class="t" style="left:779.8px;top:513.00px;line-height:10px;font-size:7.7px;letter-spacing:-0.3px;color:#252423">Keep all filters</div>
<div class="a" style="left:848.3px;top:496.6px;width:19.5px;height:9px;border:0.9px solid #605e5c;border-radius:5px;background:#fff"></div>
<div class="a" style="left:850.5px;top:498.6px;width:5px;height:5px;border-radius:50%;background:#323130"></div>
<div class="t" style="left:856.3px;top:497px;line-height:8px;font-size:5.2px;color:#605e5c">Off</div>
<div class="a" style="left:848.3px;top:512.5px;width:19.5px;height:9.4px;border-radius:5px;background:#117865"></div>
<div class="a" style="left:860.5px;top:514.7px;width:5px;height:5px;border-radius:50%;background:#fff"></div>
<div class="t" style="left:851px;top:513.2px;line-height:8px;font-size:5.2px;color:#fff">On</div>
<div class="a" style="left:877.4px;top:279px;width:3.4px;height:227px;background:#858382;border-radius:2px"></div>
<div class="t" style="left:887px;top:81.6px;line-height:10px;font-size:9.8px;letter-spacing:-0.5px;font-weight:700;color:#252423">Data</div>
<div class="a" style="left:885px;top:102.8px;width:137px;height:13.7px;background:#fff;border-radius:2px;border:1px solid #e6e4e2;border-bottom:1px solid #a8a6a4;box-shadow:0 0.6px 1px rgba(0,0,0,0.12)"></div>
<div class="t" style="left:904.6px;top:104.5px;line-height:10px;font-size:7.7px;color:#797775">Search</div>
<div class="t" style="left:910px;top:124px;line-height:10px;font-size:7.7px;letter-spacing:-0.3px;color:#252423">Data</div>
<div class="t" style="left:931.2px;top:139.7px;line-height:10px;font-size:7.8px;letter-spacing:-0.34px;color:#252423">Cost per Participant</div>
<div class="t" style="left:931.2px;top:153.9px;line-height:10px;font-size:7.8px;letter-spacing:-0.34px;color:#252423">Participants</div>
<div class="t" style="left:931.2px;top:168.6px;line-height:10px;font-size:7.8px;letter-spacing:-0.34px;color:#252423">Program</div>
<div class="t" style="left:931.2px;top:182.8px;line-height:10px;font-size:7.8px;letter-spacing:-0.34px;color:#252423">Region</div>
<svg style="left:0;top:0" width="1024" height="545" fill="none">
<path d="M1013.5 83.5l3 3-3 3M1017 83.5l3 3-3 3" stroke="#323130" stroke-width="0.9"/>
<circle cx="895.8" cy="108.8" r="3.2" stroke="#605e5c" stroke-width="0.9"/><path d="M898.2 111.2l2.3 2.3" stroke="#605e5c" stroke-width="0.9"/>
<path d="M890 127l3 3 3-3" stroke="#605e5c" stroke-width="0.8"/>
<rect x="899.5" y="125" width="6.5" height="7" stroke="#424242" stroke-width="0.8"/><path d="M899.5 127.3h6.5M899.5 129.6h6.5M901.8 125v7M904 125v7" stroke="#424242" stroke-width="0.6"/>
<circle cx="905.5" cy="132" r="2.6" fill="#117865"/><path d="M904.3 132l0.9 0.9 1.6-1.6" stroke="#fff" stroke-width="0.6"/>
<rect x="908.2" y="140.5" width="7" height="6.8" rx="0.5" fill="#117865"/><path d="M909.8 143.9l1.5 1.5 2.6-2.8" stroke="#fff" stroke-width="0.8"/>
<path d="M926.5 140.9h-5.5l3 3.2-3 3.2h5.5" stroke="#323130" stroke-width="0.8"/>
<rect x="908.2" y="154.70000000000002" width="7" height="6.8" rx="0.5" fill="#117865"/><path d="M909.8 158.10000000000002l1.5 1.5 2.6-2.8" stroke="#fff" stroke-width="0.8"/>
<path d="M926.5 155.10000000000002h-5.5l3 3.2-3 3.2h5.5" stroke="#323130" stroke-width="0.8"/>
<rect x="908.6" y="169.8" width="6.4" height="6.2" rx="0.5" stroke="#8a8886" stroke-width="0.8" fill="#fff"/>
<rect x="908.2" y="183.6" width="7" height="6.8" rx="0.5" fill="#117865"/><path d="M909.8 187.0l1.5 1.5 2.6-2.8" stroke="#fff" stroke-width="0.8"/>
</svg>
<svg style="left:0;top:0" width="1024" height="545" fill="none">
<rect x="29.5" y="513.8" width="11.5" height="7" rx="0.5" stroke="#424242" stroke-width="0.9"/><path d="M35.2 521v1.3M32.5 522.5h5.5" stroke="#424242" stroke-width="0.9"/>
<rect x="58.3" y="512.7" width="7.2" height="11.5" rx="1.2" stroke="#605e5c" stroke-width="0.9"/><path d="M61.2 522.3h1.4" stroke="#605e5c" stroke-width="0.8"/>
<path d="M81.5 518.3l-1.6 1.7 1.6 1.7M92.5 518.3l1.6 1.7-1.6 1.7" stroke="#c8c6c4" stroke-width="0.9"/>
<path d="M157.25 516.1v6.6M153.95 519.4h6.6" stroke="#fff" stroke-width="2"/>
<path d="M897.5 538.8h2M903 538h60M967.5 538h3.5M969.25 536.2v3.6" stroke="#8a8886" stroke-width="0.9"/>
<rect x="930.8" y="535" width="2" height="6.3" rx="0.6" fill="#605e5c"/>
<rect x="1004.8" y="534.6" width="9.6" height="7.2" stroke="#8a8886" stroke-width="0.9" fill="#e1dfdd"/><path d="M1006.5 536.5l1.6 1.5M1012.8 536.5l-1.6 1.5M1006.5 540l1.6-1.5M1012.8 540l-1.6-1.5" stroke="#605e5c" stroke-width="0.6"/>
</svg>
<div class="a" style="left:29px;top:526.2px;width:13.6px;height:1.8px;background:#117865;border-radius:1px"></div>
<div class="a" style="left:99.3px;top:509px;width:45.7px;height:21px;background:#fff"></div>
<div class="a" style="left:99.3px;top:527.5px;width:45.7px;height:2.5px;background:#117865"></div>
<div class="t" style="left:112px;top:516px;line-height:10px;font-size:7.2px;letter-spacing:-0.4px;color:#252423;-webkit-text-stroke:0.2px #252423">Page 1</div>
<div class="a" style="left:145px;top:509px;width:23.7px;height:21px;background:#117865"></div>
<svg style="left:0;top:0" width="1024" height="545" fill="none"><path d="M157.25 516.1v6.6M153.95 519.4h6.6" stroke="#fff" stroke-width="2"/></svg>
<div class="t" style="left:0px;top:533.9px;line-height:10px;font-size:6.9px;color:#605e5c">Page 1 of 1</div>
<div class="t" style="left:979.3px;top:533.5px;line-height:10px;font-size:7.4px;color:#605e5c">95%</div>
</body></html>
